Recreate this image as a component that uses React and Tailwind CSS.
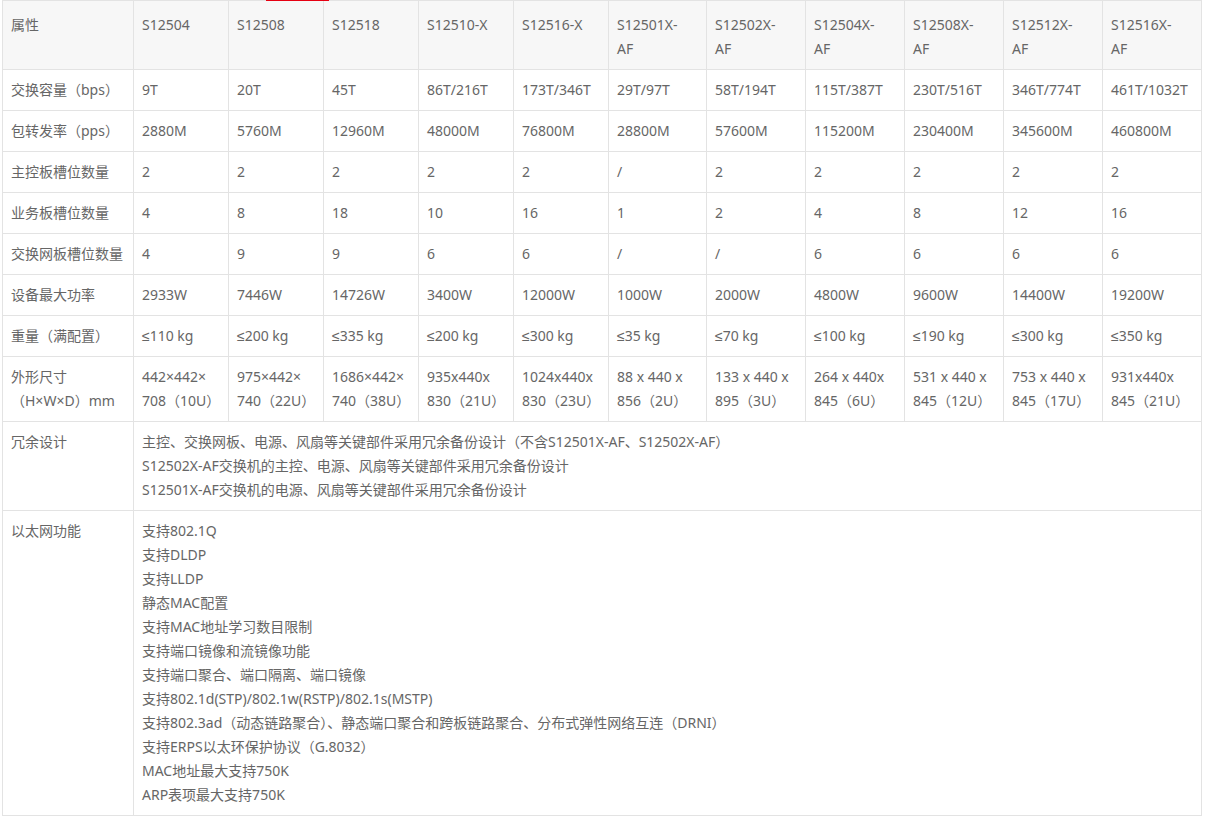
import React from "react";

const widths = [131, 95, 95, 95, 95, 95, 98, 99, 99, 99, 99, 99];

const heads = [
  "属性",
  "S12504",
  "S12508",
  "S12518",
  "S12510-X",
  "S12516-X",
  ["S12501X-", "AF"],
  ["S12502X-", "AF"],
  ["S12504X-", "AF"],
  ["S12508X-", "AF"],
  ["S12512X-", "AF"],
  ["S12516X-", "AF"],
];

const rows = [
  ["交换容量（bps）", "9T", "20T", "45T", "86T/216T", "173T/346T", "29T/97T", "58T/194T", "115T/387T", "230T/516T", "346T/774T", "461T/1032T"],
  ["包转发率（pps）", "2880M", "5760M", "12960M", "48000M", "76800M", "28800M", "57600M", "115200M", "230400M", "345600M", "460800M"],
  ["主控板槽位数量", "2", "2", "2", "2", "2", "/", "2", "2", "2", "2", "2"],
  ["业务板槽位数量", "4", "8", "18", "10", "16", "1", "2", "4", "8", "12", "16"],
  ["交换网板槽位数量", "4", "9", "9", "6", "6", "/", "/", "6", "6", "6", "6"],
  ["设备最大功率", "2933W", "7446W", "14726W", "3400W", "12000W", "1000W", "2000W", "4800W", "9600W", "14400W", "19200W"],
  ["重量（满配置）", "≤110 kg", "≤200 kg", "≤335 kg", "≤200 kg", "≤300 kg", "≤35 kg", "≤70 kg", "≤100 kg", "≤190 kg", "≤300 kg", "≤350 kg"],
  [
    ["外形尺寸", "（H×W×D）mm"],
    ["442×442×", "708（10U）"],
    ["975×442×", "740（22U）"],
    ["1686×442×", "740（38U）"],
    ["935x440x", "830（21U）"],
    ["1024x440x", "830（23U）"],
    ["88 x 440 x", "856（2U）"],
    ["133 x 440 x", "895（3U）"],
    ["264 x 440x", "845（6U）"],
    ["531 x 440 x", "845（12U）"],
    ["753 x 440 x", "845（17U）"],
    ["931x440x", "845（21U）"],
  ],
];

const redundancy = [
  "主控、交换网板、电源、风扇等关键部件采用冗余备份设计（不含S12501X-AF、S12502X-AF）",
  "S12502X-AF交换机的主控、电源、风扇等关键部件采用冗余备份设计",
  "S12501X-AF交换机的电源、风扇等关键部件采用冗余备份设计",
];

const ethernet = [
  "支持802.1Q",
  "支持DLDP",
  "支持LLDP",
  "静态MAC配置",
  "支持MAC地址学习数目限制",
  "支持端口镜像和流镜像功能",
  "支持端口聚合、端口隔离、端口镜像",
  "支持802.1d(STP)/802.1w(RSTP)/802.1s(MSTP)",
  "支持802.3ad（动态链路聚合）、静态端口聚合和跨板链路聚合、分布式弹性网络互连（DRNI）",
  "支持ERPS以太环保护协议（G.8032）",
  "MAC地址最大支持750K",
  "ARP表项最大支持750K",
];

const td = "border border-[#e3e3e3] px-2 pb-2 align-top text-left font-normal";

function Cell({ v }) {
  if (Array.isArray(v)) {
    return v.map((t, i) => (
      <div key={i} className="whitespace-nowrap">
        {t}
      </div>
    ));
  }
  if (typeof v === "string" && v.startsWith("≤")) {
    return (
      <>
        <span className="[font-family:'Liberation_Sans',sans-serif]">≤</span>
        {v.slice(1)}
      </>
    );
  }
  return v;
}

export default function App() {
  return (
    <div className="relative bg-white pl-[2px] text-[14px] leading-6 text-[#666] [font-family:'Noto_Sans','Noto_Sans_CJK_SC',sans-serif]">
      <div className="absolute left-[266px] top-0 h-px w-[63px] bg-[#e60012]" />
      <table className="w-[1200px] table-fixed border-collapse">
        <colgroup>
          {widths.map((w, i) => (
            <col key={i} style={{ width: w }} />
          ))}
        </colgroup>
        <thead>
          <tr className="bg-[#f7f7f7]">
            {heads.map((h, i) => (
              <th key={i} className={td + " pt-3"}>
                <Cell v={h} />
              </th>
            ))}
          </tr>
        </thead>
        <tbody>
          {rows.map((r, ri) => (
            <tr key={ri}>
              {r.map((c, ci) => (
                <td key={ci} className={td + " pt-2"}>
                  <Cell v={c} />
                </td>
              ))}
            </tr>
          ))}
          <tr>
            <td className={td + " pt-2"}>冗余设计</td>
            <td className={td + " pt-2"} colSpan={11}>
              {redundancy.map((t) => (
                <div key={t}>{t}</div>
              ))}
            </td>
          </tr>
          <tr>
            <td className={td + " pt-2"}>以太网功能</td>
            <td className={td + " pt-2"} colSpan={11}>
              {ethernet.map((t) => (
                <div key={t}>{t}</div>
              ))}
            </td>
          </tr>
        </tbody>
      </table>
    </div>
  );
}
